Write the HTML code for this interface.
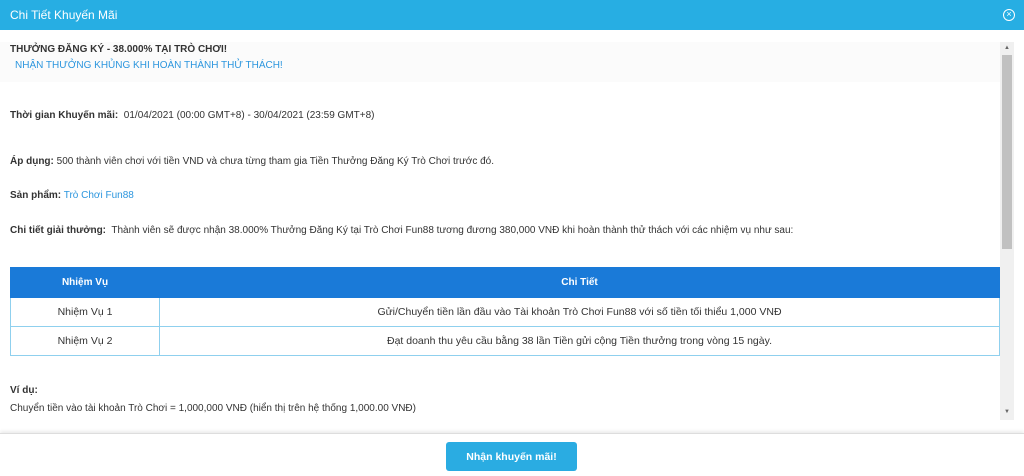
<!DOCTYPE html>
<html><head><meta charset="utf-8"><style>
*{margin:0;padding:0;box-sizing:border-box}
body{width:1024px;height:476px;overflow:hidden;background:#fff;font-family:"Liberation Sans",sans-serif;font-size:10px;color:#333;position:relative}
.hdr{position:absolute;left:0;top:0;width:1024px;height:30px;background:#27aee3;color:#fff;font-size:12px;line-height:30px;padding-left:10px}
.close{position:absolute;right:9px;top:9px;width:12px;height:12px;border:1.5px solid #fff;border-radius:50%;color:#fff;font-size:9px;line-height:9px;text-align:center}
.t{position:absolute;left:10px;white-space:nowrap}
.b{font-weight:bold}
.blue{color:#2c96de}
.banner{position:absolute;left:0;top:42px;width:1000px;height:40px;background:#fbfbfb}
table{position:absolute;left:10px;top:267px;width:990px;border-collapse:collapse;font-size:10.5px}
td,th{border:1px solid #8fd0ee;text-align:center;height:29px;font-weight:normal}
th{background:#1a7ad8;color:#fff;border-color:#1a7ad8;height:30px;font-weight:bold;font-size:10px}
.sb{position:absolute;left:1000px;top:42px;width:14px;height:378px;background:#f0f0f0}
.th{position:absolute;left:1002px;top:55px;width:10px;height:194px;background:#c1c1c1}
.ar{position:absolute;left:1004px;font-size:6px;color:#666}
.foot{position:absolute;left:0;top:433px;width:1024px;height:43px;border-top:1px solid #ddd;box-shadow:0 -2px 3px rgba(0,0,0,.08);background:#fff}
.btn{position:absolute;left:446px;top:442px;width:131px;height:29px;background:#2aace2;border-radius:3px;color:#fff;font-weight:bold;text-align:center;line-height:31px;font-size:10.5px}
</style></head><body>
<div class="hdr">Chi Tiết Khuyến Mãi<div class="close">×</div></div>
<div class="banner"></div>
<div class="t b" style="top:44px">THƯỞNG ĐĂNG KÝ - 38.000% TẠI TRÒ CHƠI!</div>
<div class="t blue" style="top:60px;left:15px">NHẬN THƯỞNG KHỦNG KHI HOÀN THÀNH THỬ THÁCH!</div>
<div class="t" style="top:110px"><span class="b">Thời gian Khuyến mãi:</span>&nbsp; 01/04/2021 (00:00 GMT+8) - 30/04/2021 (23:59 GMT+8)</div>
<div class="t" style="top:156px"><span class="b">Áp dụng:</span> 500 thành viên chơi với tiền VND và chưa từng tham gia Tiền Thưởng Đăng Ký Trò Chơi trước đó.</div>
<div class="t" style="top:190px"><span class="b">Sản phẩm:</span> <span class="blue">Trò Chơi Fun88</span></div>
<div class="t" style="top:225px"><span class="b">Chi tiết giải thưởng:</span>&nbsp; Thành viên sẽ được nhận 38.000% Thưởng Đăng Ký tại Trò Chơi Fun88 tương đương 380,000 VNĐ khi hoàn thành thử thách với các nhiệm vụ như sau:</div>
<table>
<tr><th style="width:149px">Nhiệm Vụ</th><th>Chi Tiết</th></tr>
<tr><td>Nhiệm Vụ 1</td><td>Gửi/Chuyển tiền lần đầu vào Tài khoản Trò Chơi Fun88 với số tiền tối thiểu 1,000 VNĐ</td></tr>
<tr><td>Nhiệm Vụ 2</td><td>Đạt doanh thu yêu cầu bằng 38 lần Tiền gửi cộng Tiền thưởng trong vòng 15 ngày.</td></tr>
</table>
<div class="t b" style="top:385px">Ví dụ:</div>
<div class="t" style="top:403px">Chuyển tiền vào tài khoản Trò Chơi = 1,000,000 VNĐ (hiển thị trên hệ thống 1,000.00 VNĐ)</div>
<div class="sb"></div><div class="th"></div>
<div class="ar" style="top:45px">▲</div><div class="ar" style="top:409px">▼</div>
<div class="foot"></div>
<div class="btn">Nhận khuyến mãi!</div>
</body></html>
